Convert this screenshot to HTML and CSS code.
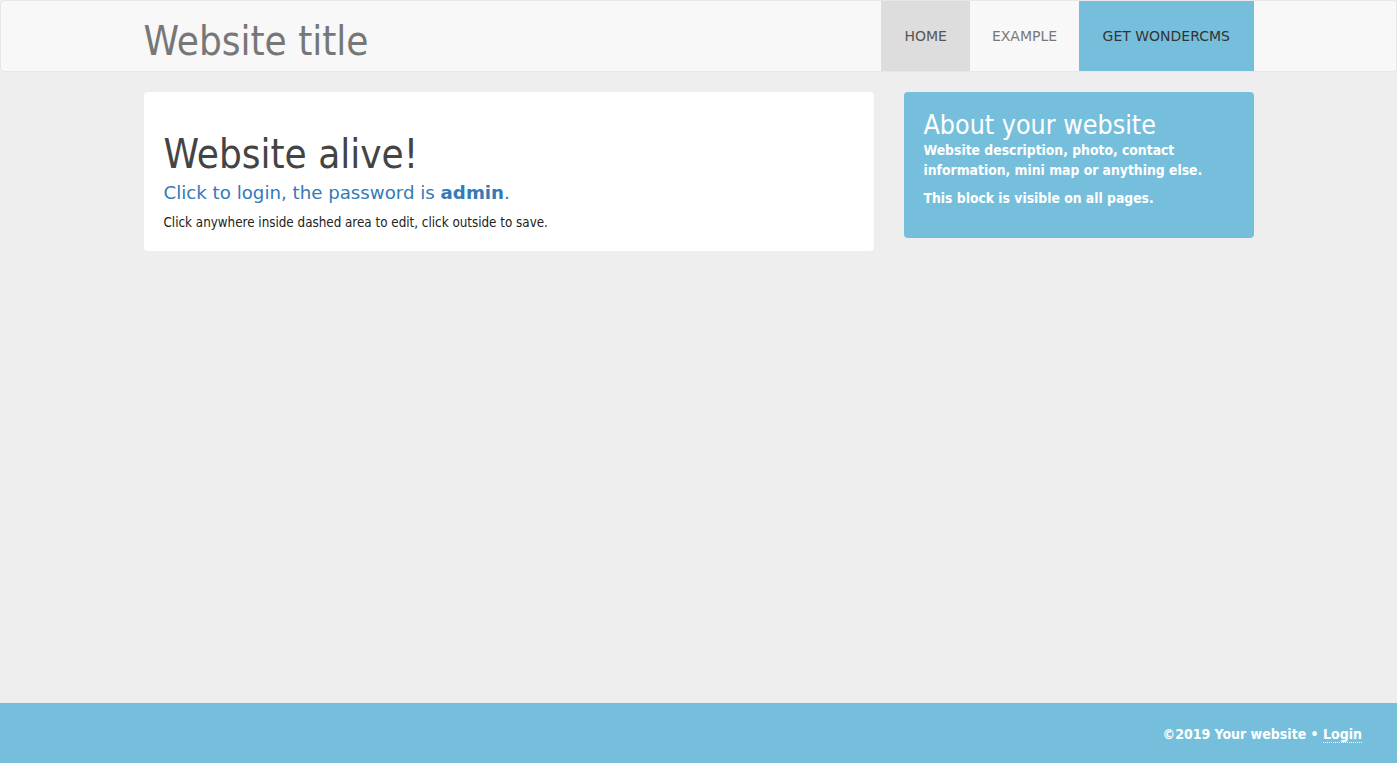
FILE: index.html
```html
<!DOCTYPE html>
<html lang="en">
<head>
<meta charset="utf-8">
<title>Website title</title>
<link rel="stylesheet" href="styles.css">
</head>
<body>
<div class="page">
  <nav class="navbar">
    <div class="container nav-inner">
      <a class="brand" href="#">Website title</a>
      <ul class="menu">
        <li class="item active"><a href="#">Home</a></li>
        <li class="item plain"><a href="#">Example</a></li>
        <li class="item cta"><a href="#">Get WonderCMS</a></li>
      </ul>
    </div>
  </nav>
  <main class="container row">
    <section class="card">
      <h1 class="title">Website alive!</h1>
      <h4 class="lead"><a href="#">Click to login, the password is <b>admin</b>.</a></h4>
      <p class="hint">Click anywhere inside dashed area to edit, click outside to save.</p>
    </section>
    <aside class="side">
      <h3 class="side-title">About your website</h3>
      <p class="side-text">Website description, photo, contact information, mini map or anything else.</p>
      <p class="side-text">This block is visible on all pages.</p>
    </aside>
  </main>
</div>
<footer class="footer">
  <p class="foot-text">©2019 Your website • <a class="login" href="#">Login</a></p>
</footer>
</body>
</html>
```

FILE: styles.css
```css
* { box-sizing: border-box; }
html, body { height: 100%; }
body {
  margin: 0;
  background: #eeeeee;
  font-family: "DejaVu Sans", Verdana, sans-serif;
  font-size: 13px;
  color: #333;
  display: flex;
  flex-direction: column;
}
a { text-decoration: none; }
.page { flex: 1; }
.container {
  width: 1110px;
  margin: 0 auto;
}
.navbar {
  background: #f8f8f8;
  border: 1px solid #e7e7e7;
  border-radius: 4px;
  height: 72px;
  margin-bottom: 20px;
}
.nav-inner {
  display: flex;
  justify-content: space-between;
  align-items: stretch;
  height: 70px;
}
.brand {
  color: #777;
  font-family: "DejaVu Sans Condensed", "DejaVu Sans", sans-serif;
  font-size: 40px;
  line-height: 81px;
  height: 70px;
}
.menu {
  list-style: none;
  margin: 0;
  padding: 0;
  display: flex;
}
.item a {
  display: block;
  padding: 0 23px;
  line-height: 70px;
  height: 70px;
  font-size: 14px;
  text-transform: uppercase;
  color: #777;
}
.item.active a { background: #dddddd; color: #555; }
.item.plain a { padding: 0 22px; }
.item.cta a { background: #76bfdc; color: #333; padding: 0 23.5px; }
.row {
  display: flex;
  gap: 30px;
  align-items: flex-start;
}
.card {
  width: 730px;
  background: #fff;
  border-radius: 4px;
  padding: 20px 20px 18.6px;
}
.title {
  margin: 20px 0 3.5px;
  font-family: "DejaVu Sans Condensed", "DejaVu Sans", sans-serif;
  font-size: 40px;
  font-weight: normal;
  color: #444;
  line-height: 44px;
}
.lead {
  margin: 0 0 7px;
  font-size: 18.2px;
  font-weight: normal;
  line-height: 26px;
}
.lead a { color: #337ab7; }
.hint {
  margin: 0;
  font-family: "DejaVu Sans Condensed", "DejaVu Sans", sans-serif;
  font-size: 13.3px;
  line-height: 20px;
  color: #222;
}
.side {
  width: 350px;
  background: #76bfdc;
  border-radius: 4px;
  padding: 18px 20px 30px;
  color: #fff;
  font-family: "DejaVu Sans Condensed", "DejaVu Sans", sans-serif;
}
.side-title {
  margin: 0;
  font-size: 26.6px;
  font-weight: normal;
  line-height: 30px;
}
.side-text {
  margin: 0 0 8px;
  font-size: 13.8px;
  font-weight: bold;
  line-height: 20px;
}
.side-text:last-child { margin-bottom: 0; }
.footer {
  background: #76bfdc;
  height: 60px;
  padding: 2px 35px 0;
  display: flex;
  justify-content: flex-end;
  align-items: center;
}
.foot-text {
  margin: 0;
  color: #fff;
  font-family: "DejaVu Sans Condensed", "DejaVu Sans", sans-serif;
  font-weight: bold;
  font-size: 14px;
}
.login {
  color: #fff;
  border-bottom: 1px dotted #fff;
}
```
